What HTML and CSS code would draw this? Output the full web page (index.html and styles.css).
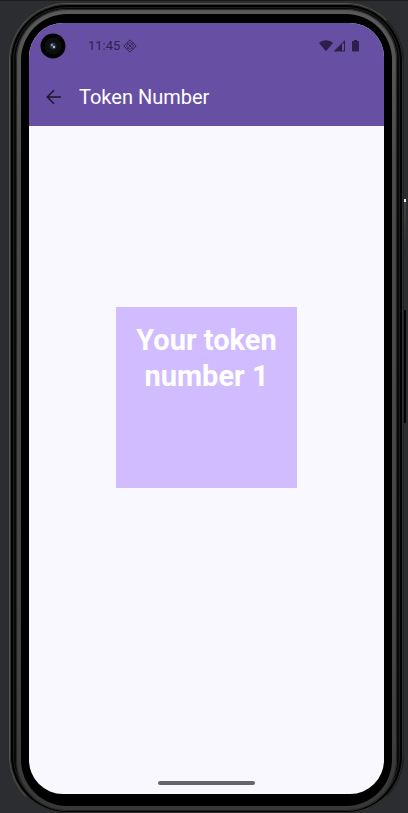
FILE: index.html
```
<!DOCTYPE html>
<html lang="en">
<head>
<meta charset="utf-8">
<meta name="viewport" content="width=device-width, initial-scale=1">
<title>Token Number</title>
<link rel="stylesheet" href="styles.css">
</head>
<body>
<div class="phone">
  <div class="rail">
    <div class="bezel">
      <div class="screen">
        <header class="top">
          <div class="status">
            <svg class="camera" viewBox="0 0 26 26" aria-hidden="true">
              <circle cx="13" cy="13" r="12.5" fill="#020203"/>
              <circle cx="13" cy="13" r="8.5" fill="#0d0e10"/>
              <circle cx="13" cy="13" r="3.5" fill="#20283a"/>
              <circle cx="12" cy="12" r="1.4" fill="#7186a0"/>
              <circle cx="14" cy="14" r="1.2" fill="#b4c1ce"/>
            </svg>
            <span class="clock">11:45</span>
            <svg class="debug" viewBox="0 0 14 14" fill="none" stroke="#30224f" aria-hidden="true">
              <path d="M7 .8 13.2 7 7 13.2.8 7Z" stroke-width="1"/>
              <path d="M7 3.3 10.7 7 7 10.7 3.3 7Z" stroke-width=".9"/>
              <path d="M4 4l6 6M10 4l-6 6" stroke-width=".6"/>
              <circle cx="7" cy="7" r="1" fill="#30224f" stroke="none"/>
            </svg>
            <svg class="signals" viewBox="0 0 42 14" fill="#2c1f48" aria-hidden="true">
              <path d="M0 4C4 .4 10 .4 14 4L7 12.3Z"/>
              <path fill-rule="evenodd" d="M14.500 12.500 26 1v11.500ZM23 4.500v7h2v-7Z"/>
              <path d="M35 1h3v1h1.200q.8 0 .8.8v8.900q0 .8-.8.8h-5.400q-.8 0-.8-.8V2.800q0-.8.8-.8H35Z"/>
            </svg>
          </div>
          <div class="appbar">
            <button class="back" type="button" aria-label="Back">
              <svg viewBox="0 0 16 16" fill="none" stroke="#1d192b" stroke-width="1.6" aria-hidden="true"><path d="M15 8H1.500M8 1.300 1.300 8 8 14.700"/></svg>
            </button>
            <h1 class="title">Token Number</h1>
          </div>
        </header>
        <main class="content">
          <p class="token">Your token number 1</p>
        </main>
        <div class="home"></div>
      </div>
    </div>
  </div>
  <span class="key power"></span>
  <span class="key volume"></span>
</div>
</body>
</html>
```
FILE: styles.css
```
* { box-sizing: border-box; }

body {
  margin: 0;
  padding: 2px 4px 0 9px;
  min-height: 100vh;
  display: flex;
  overflow: hidden;
  background: #2b2d30;
  border-top: 1px solid #1b1c1e;
  font-family: Roboto, sans-serif;
}

.phone {
  position: relative;
  flex: 1;
  display: flex;
  padding: 5px 6px 2px;
  margin-bottom: -1px;
  border-radius: 58px;
  background: #080808;
  border: 1px solid #55554f;
  border-right-color: #222224;
  border-bottom-color: #333;
  box-shadow: inset 0 0 0 1px #30302e, inset 0 0 0 3px #000, inset 0 0 0 4px #1c1c1c;
}

.rail {
  flex: 1;
  display: flex;
  padding: 5px;
  border-radius: 51px;
  background: linear-gradient(#5a5a5a, #4a4a4a 20%, #444 80%, #383838);
  box-shadow: inset 0 0 1px 1px #222;
}

.bezel {
  flex: 1;
  display: flex;
  padding: 9px 8px 12px;
  border-radius: 46px;
  background: #000;
}

.screen {
  flex: 1;
  display: flex;
  flex-direction: column;
  overflow: hidden;
  border-radius: 34px;
  background: #f9f8ff;
}

.top { background: #6750a4; }

.status {
  display: flex;
  align-items: center;
  height: 46px;
  padding: 0 23px 0 11px;
}

.camera { width: 26px; height: 26px; }

.clock {
  margin-left: 22px;
  color: #30224f;
  font-size: 13px;
  line-height: 16px;
}

.debug { width: 14px; height: 14px; margin-left: 3px; }

.signals { width: 42px; height: 14px; margin-left: auto; }

.appbar {
  display: flex;
  align-items: center;
  height: 57px;
  padding: 0 16px 2px;
}

.back {
  display: flex;
  padding: 0;
  border: 0;
  background: none;
}

.back svg { width: 18px; height: 16px; }

.title {
  margin: 0 0 0 16px;
  color: #fff;
  font-size: 20px;
  line-height: 24px;
  font-weight: 400;
}

.content {
  flex: 1;
  display: flex;
  justify-content: center;
  align-items: flex-start;
  padding-top: 181px;
}

.token {
  margin: 0;
  width: 181px;
  aspect-ratio: 1;
  padding: 15px 16px;
  background: #d0bcff;
  color: #fff;
  font-size: 29px;
  line-height: 36px;
  font-weight: 700;
  text-align: center;
}

.home {
  align-self: center;
  width: 97px;
  height: 4px;
  margin-bottom: 9px;
  border-radius: 2px;
  background: #66656a;
}

.key {
  position: absolute;
  right: -3px;
  width: 2px;
}

.power {
  top: 195px;
  height: 54px;
  background: linear-gradient(#eee 3px, #444 3px, #29292b);
}

.volume {
  top: 306px;
  height: 113px;
  background: #050505;
}
```
